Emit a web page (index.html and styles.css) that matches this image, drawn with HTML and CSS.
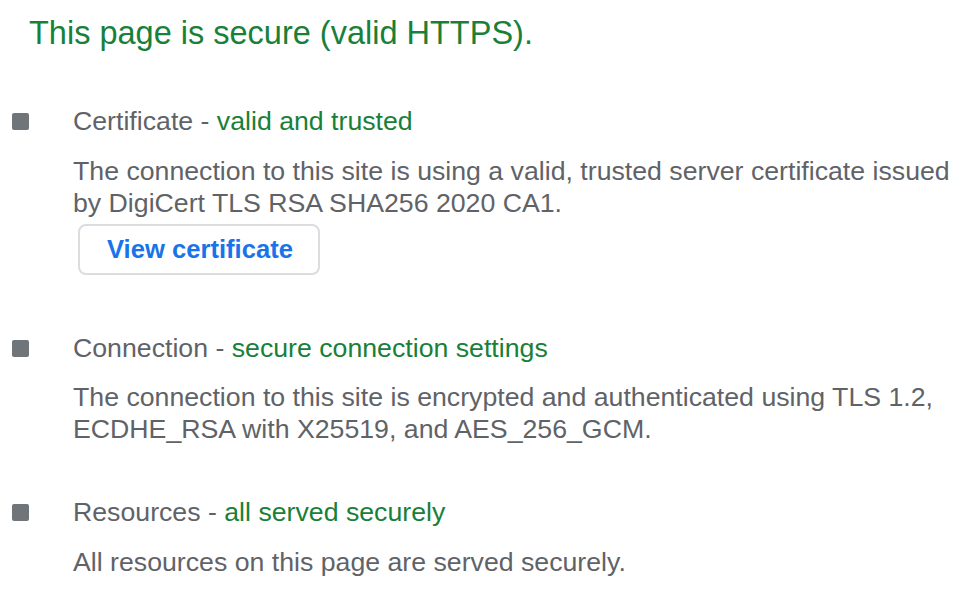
FILE: index.html
```html
<!DOCTYPE html>
<html>
<head>
<meta charset="utf-8">
<link rel="stylesheet" href="styles.css">
</head>
<body>
<div class="panel">
  <h1 class="title">This page is secure (valid HTTPS).</h1>
  <div class="section">
    <span class="bullet"></span>
    <div class="content">
      <div class="heading">Certificate - <span class="ok">valid and trusted</span></div>
      <div class="desc">The connection to this site is using a valid, trusted server certificate issued by DigiCert TLS RSA SHA256 2020 CA1.</div>
      <button class="btn">View certificate</button>
    </div>
  </div>
  <div class="section">
    <span class="bullet"></span>
    <div class="content">
      <div class="heading">Connection - <span class="ok">secure connection settings</span></div>
      <div class="desc">The connection to this site is encrypted and authenticated using TLS 1.2, ECDHE_RSA with X25519, and AES_256_GCM.</div>
    </div>
  </div>
  <div class="section">
    <span class="bullet"></span>
    <div class="content">
      <div class="heading">Resources - <span class="ok">all served securely</span></div>
      <div class="desc">All resources on this page are served securely.</div>
    </div>
  </div>
</div>
</body>
</html>
```
FILE: styles.css
```css
html, body {
  margin: 0;
  padding: 0;
  background: #ffffff;
}
body {
  font-family: "Liberation Sans", Arial, Helvetica, sans-serif;
  color: #5f6368;
}
.panel {
  padding-top: 13px;
}
.title {
  margin: 0 0 52px 29px;
  font-size: 32.5px;
  line-height: 40px;
  font-weight: normal;
  color: #188038;
}
.section {
  display: flex;
  align-items: flex-start;
  margin-bottom: 51px;
}
.section:last-child {
  margin-bottom: 0;
}
.bullet {
  flex: none;
  width: 17px;
  height: 17px;
  margin: 8px 44px 0 12px;
  background: #70757a;
  border-radius: 2px;
}
.content {
  flex: 1;
  font-size: 26.7px;
  line-height: 32px;
}
.ok {
  color: #188038;
}
.desc {
  margin-top: 17.5px;
}
.btn {
  display: block;
  margin: 5px 0 6px 5px;
  height: 51px;
  padding: 0 25px 0 27px;
  font-family: "Liberation Sans", Arial, Helvetica, sans-serif;
  font-size: 25.6px;
  font-weight: bold;
  color: #1a73e8;
  background: #ffffff;
  border: 2px solid #dadce0;
  border-radius: 8px;
}
```
